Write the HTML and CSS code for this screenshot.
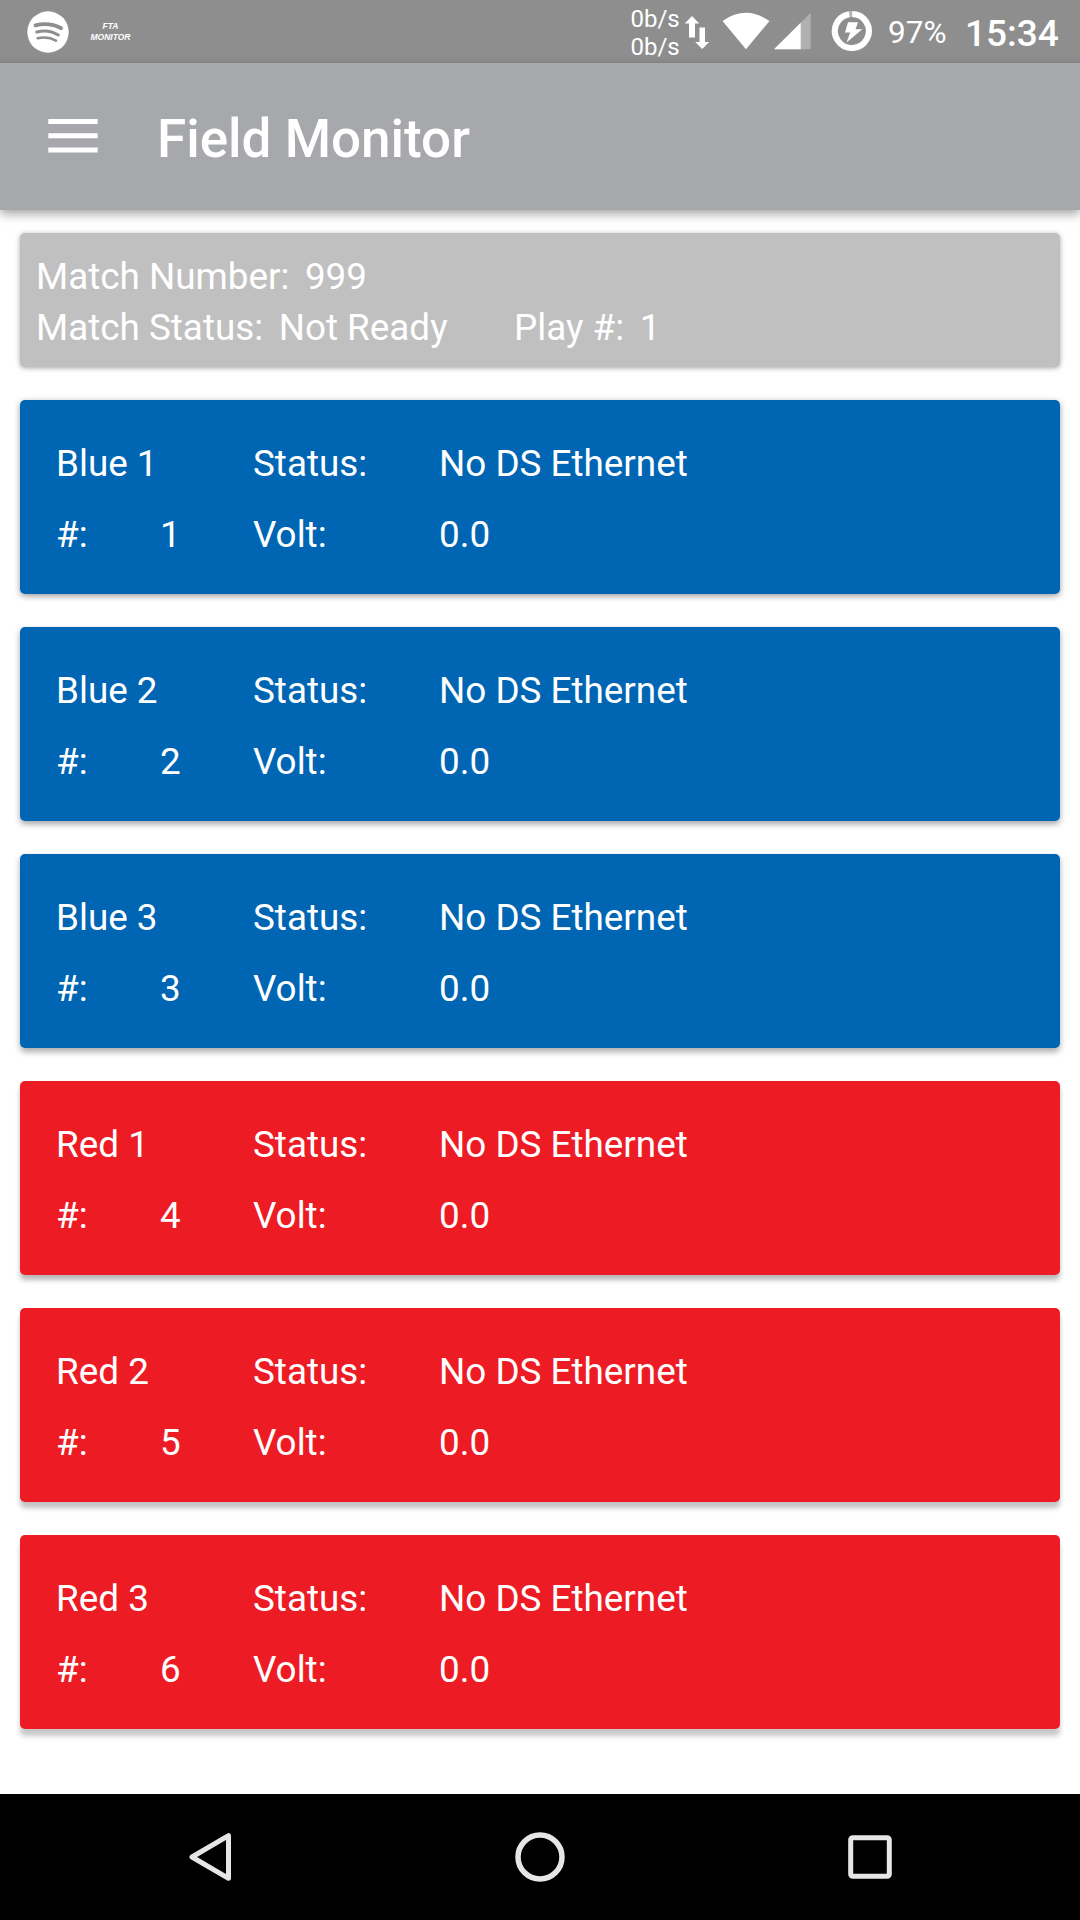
FILE: index.html
```html
<!DOCTYPE html>
<html lang="en">
<head>
<meta charset="utf-8">
<title>Field Monitor</title>
<link rel="stylesheet" href="styles.css">
</head>
<body>
<div class="screen">
  <header class="status-bar">
    <svg class="spotify" viewBox="0 0 42 42" width="42" height="42">
      <circle cx="21" cy="21" r="20.7" fill="#fff"/>
      <g fill="none" stroke="#8e8e8e" stroke-linecap="round">
        <path d="M8.500 14.400C17 12 27.500 13 34 17.200" stroke-width="3.800"/>
        <path d="M9.700 21C17 19.100 25 20 31.300 24" stroke-width="3"/>
        <path d="M10.600 27.300C17 25.700 23.500 26.500 29 29.700" stroke-width="2.500"/>
      </g>
    </svg>
    <div class="fta"><span>FTA</span><span>MONITOR</span></div>
    <div class="net"><span>0b/s</span><span>0b/s</span></div>
    <svg class="indicators" viewBox="684 10 128 42" width="128" height="42">
      <path fill="#fff" d="M692 16l7.200 7.500h-4.200v14h-6v-14h-4.200zM699.500 27.500h5.500v14.500h4.200l-7 7-7-7h4.300z"/>
      <path fill="#fff" d="M722.500 21Q746 4.700 769.500 21L746 49.300z"/>
      <path fill="#fff" opacity=".3" d="M774 49.300L810.700 12.700V49.300z"/>
      <path fill="#fff" d="M774 49.300L800.700 22.700V49.300z"/>
    </svg>
    <svg class="battery" viewBox="0 0 42 42" width="42" height="42">
      <circle cx="21" cy="21" r="17" fill="none" stroke="#fff" stroke-opacity=".35" stroke-width="6"/>
      <path d="M21.200 4A17 17 0 1 1 18.200 4.200" fill="none" stroke="#fff" stroke-width="6"/>
      <path fill="#fff" d="M17 12.300h10l-2.500 7h6.800L15.500 32.500l3.700-10H14z"/>
    </svg>
    <span class="percent">97%</span>
    <span class="clock">15:34</span>
  </header>
  <div class="app-bar">
    <svg class="menu" viewBox="0 0 50 36" width="50" height="36">
      <path fill="#fff" d="M.3 1h49.400v5H.3zM.3 15.300h49.400v5H.3zM.3 29.500h49.400v5H.3z"/>
    </svg>
    <h1 class="title">Field Monitor</h1>
  </div>
  <main class="content">
    <section class="card match">
      <div class="line"><span>Match Number:</span><span>999</span></div>
      <div class="line"><span>Match Status:</span><span>Not Ready</span><span class="play">Play #:</span><span>1</span></div>
    </section>
    <section class="card team blue e1"><span class="name">Blue 1</span><span>Status:</span><span>No DS Ethernet</span><span>#:</span><span>1</span><span>Volt:</span><span>0.0</span></section>
    <section class="card team blue e2"><span class="name">Blue 2</span><span>Status:</span><span>No DS Ethernet</span><span>#:</span><span>2</span><span>Volt:</span><span>0.0</span></section>
    <section class="card team blue e3"><span class="name">Blue 3</span><span>Status:</span><span>No DS Ethernet</span><span>#:</span><span>3</span><span>Volt:</span><span>0.0</span></section>
    <section class="card team red e4"><span class="name">Red 1</span><span>Status:</span><span>No DS Ethernet</span><span>#:</span><span>4</span><span>Volt:</span><span>0.0</span></section>
    <section class="card team red e5"><span class="name">Red 2</span><span>Status:</span><span>No DS Ethernet</span><span>#:</span><span>5</span><span>Volt:</span><span>0.0</span></section>
    <section class="card team red e6"><span class="name">Red 3</span><span>Status:</span><span>No DS Ethernet</span><span>#:</span><span>6</span><span>Volt:</span><span>0.0</span></section>
  </main>
  <nav class="nav-bar">
    <svg viewBox="0 0 60 60" width="60" height="60"><path d="M48.500 8.700V51.300L12 30z" fill="none" stroke="#e6e6e6" stroke-width="5" stroke-linejoin="round"/></svg>
    <svg viewBox="0 0 60 60" width="60" height="60"><circle cx="30" cy="30" r="22" fill="none" stroke="#e6e6e6" stroke-width="5.500"/></svg>
    <svg viewBox="0 0 60 60" width="60" height="60"><rect x="10.700" y="10.700" width="38.600" height="38.600" rx="2" fill="none" stroke="#e6e6e6" stroke-width="5"/></svg>
  </nav>
</div>
</body>
</html>
```
FILE: styles.css
```css
* { box-sizing: border-box; }
body {
  margin: 0;
  background: #fff;
  color: #fff;
  font-family: Roboto, sans-serif;
  font-size: 36.85px;
}
.screen {
  width: 1080px;
  height: 1920px;
  display: flex;
  flex-direction: column;
  overflow: hidden;
}
.status-bar {
  height: 63px;
  flex: none;
  display: flex;
  align-items: flex-start;
  padding-left: 26.5px;
  background: #8e8e8e;
}
.spotify { margin-top: 10.5px; }
.fta {
  display: flex;
  flex-direction: column;
  align-items: center;
  width: 60px;
  margin: 21px 0 0 12px;
  font: italic bold 8.5px/11px "Liberation Sans", sans-serif;
}
.net {
  display: flex;
  flex-direction: column;
  margin: 5px 0 0 490px;
  width: 53.5px;
  font-size: 24px;
  line-height: 28px;
}
.indicators { margin-top: 10px; flex: none; }
.battery { margin: 10px 0 0 19px; flex: none; }
.percent { margin: 15px 0 0 15px; width: 77px; font-size: 31.5px; line-height: 36px; }
.clock { margin-top: 12px; font-size: 37px; line-height: 44px; font-weight: 500; }
.app-bar {
  height: 147px;
  flex: none;
  display: flex;
  align-items: center;
  padding-left: 48px;
  background: #a7a8ac;
  box-shadow: 0 4px 10px rgba(0, 0, 0, .36);
}
.menu { margin-top: -1px; }
.title { margin: 5px 0 0 59px; font-size: 53px; line-height: 62px; font-weight: 500; }
.content {
  flex: 1;
  display: flex;
  flex-direction: column;
  gap: 33px;
  padding: 23px 20px 0;
}
.card { border-radius: 5px; flex: none; }
.match {
  height: 134px;
  padding: 18px 16px;
  background: #c0c0c0;
  box-shadow: 0 1px 5px rgba(0, 0, 0, .36);
}
.line { display: flex; gap: 15.5px; height: 51px; line-height: 51px; white-space: pre; }
.play { margin-left: 51px; }
.team {
  height: 194px;
  display: grid;
  grid-template-columns: 104px 93px 186px 1fr;
  grid-template-rows: 71px 71px;
  padding: 28px 36px 0;
  line-height: 71px;
}
.name { grid-column: span 2; }
.blue { background: #0066b3; }
.red { background: #ed1c24; }
.e1 { box-shadow: 0 2px 6px rgba(0, 0, 0, .4); }
.e2 { box-shadow: 0 3px 6px rgba(0, 0, 0, .36); }
.e3 { box-shadow: 0 3.5px 6px rgba(0, 0, 0, .33); }
.e4 { box-shadow: 0 5px 5px rgba(0, 0, 0, .28); }
.e5 { box-shadow: 0 6px 5px rgba(0, 0, 0, .24); }
.e6 { box-shadow: 0 7px 5px rgba(0, 0, 0, .22); }
.nav-bar {
  height: 126px;
  flex: none;
  display: flex;
  align-items: center;
  justify-content: space-between;
  padding: 0 180px;
  background: #000;
}
```
